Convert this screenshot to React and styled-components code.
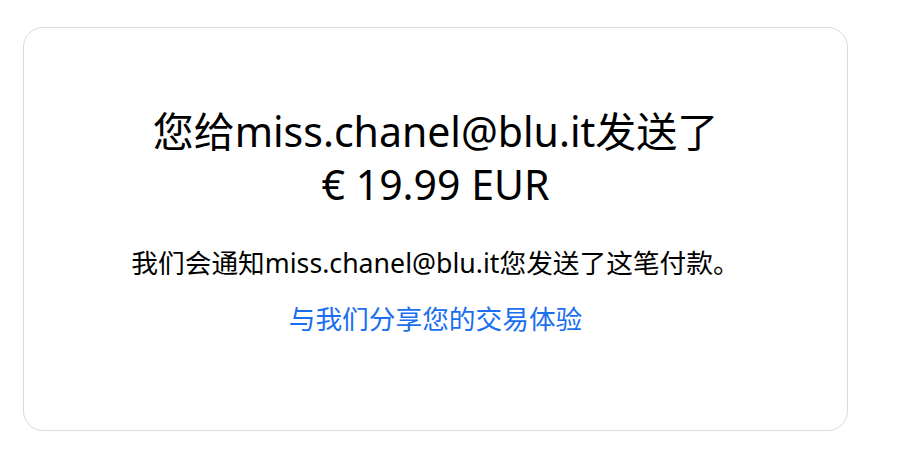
import React from "react";
import styled, { createGlobalStyle } from "styled-components";

const Global = createGlobalStyle`
  html, body { margin: 0; padding: 0; background: #ffffff; }
  body { font-family: "Noto Sans", "Noto Sans CJK SC", sans-serif; color: #000; }
`;

const Page = styled.div`
  padding: 27px 0 0 23px;
`;

const Card = styled.section`
  box-sizing: border-box;
  width: 825px;
  height: 404px;
  border: 1px solid #dcdbd4;
  border-radius: 20px;
  display: flex;
  flex-direction: column;
  align-items: center;
  padding-top: 77px;
`;

const Title = styled.h1`
  margin: 0;
  font-size: 41px;
  font-weight: 400;
  line-height: 53px;
  text-align: center;
  color: #000;
`;

const Message = styled.p`
  margin: 34px 0 0;
  font-size: 26.7px;
  line-height: 36px;
  text-align: center;
  color: #000;
`;

const Link = styled.a`
  margin-top: 20px;
  font-size: 26.7px;
  line-height: 36px;
  color: #1a6ff0;
  text-decoration: none;
  cursor: pointer;
`;

export default function App() {
  return (
    <>
      <Global />
      <Page>
        <Card>
          <Title>
            您给miss.chanel@blu.it发送了
            <br />
            € 19.99 EUR
          </Title>
          <Message>我们会通知miss.chanel@blu.it您发送了这笔付款。</Message>
          <Link>与我们分享您的交易体验</Link>
        </Card>
      </Page>
    </>
  );
}
